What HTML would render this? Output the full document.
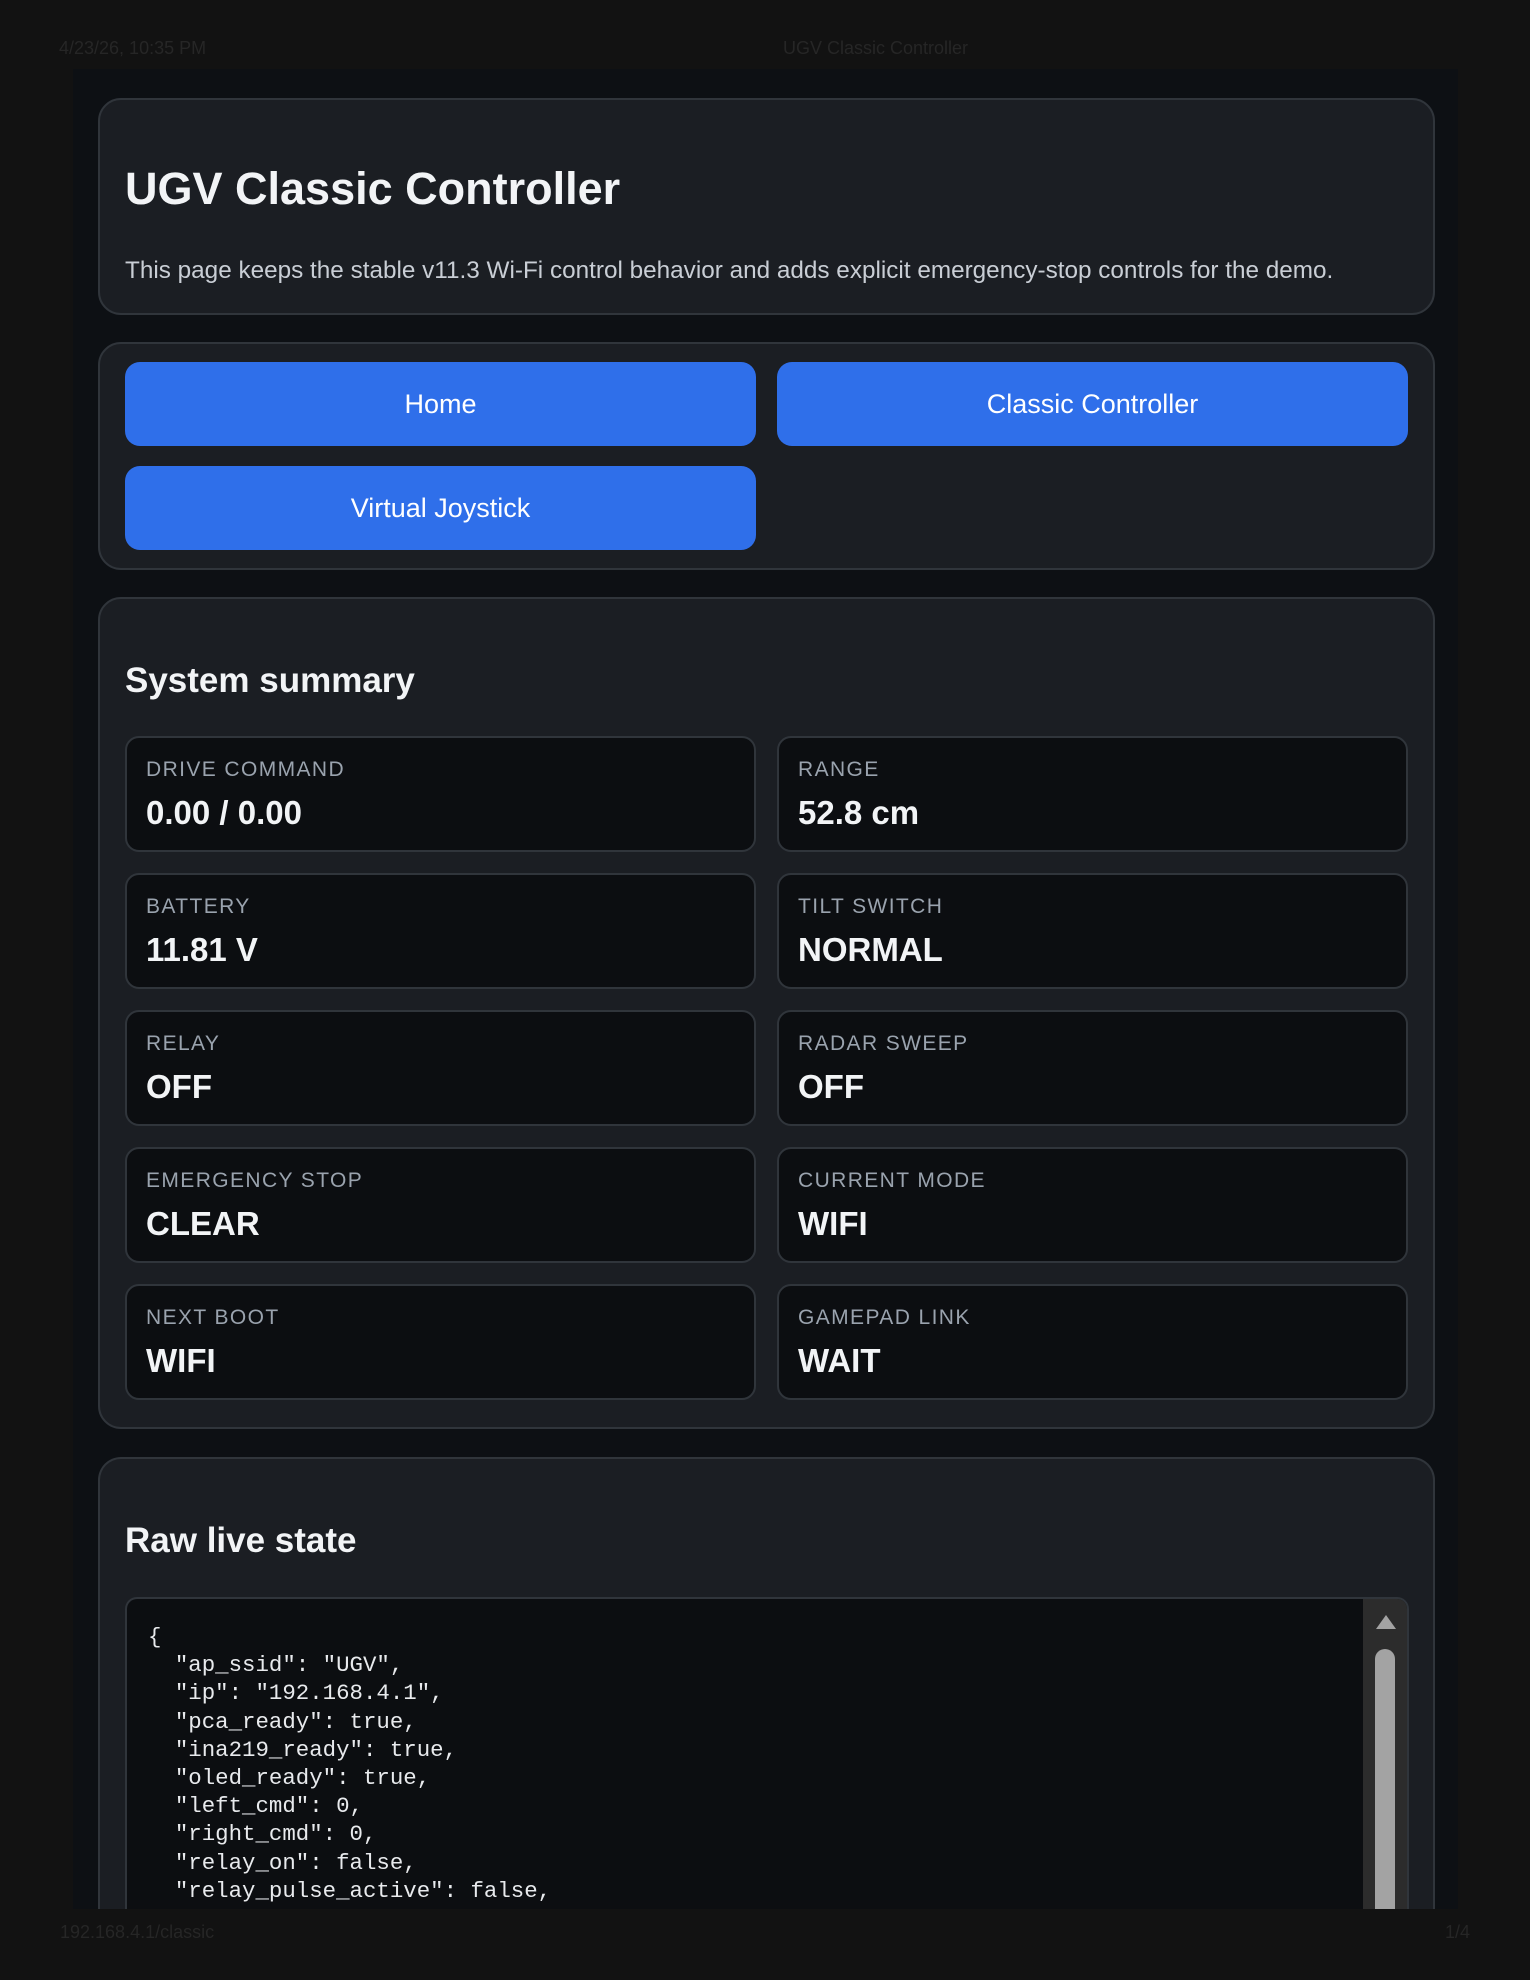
<!DOCTYPE html>
<html><head><meta charset="utf-8"><style>
*{box-sizing:border-box;margin:0;padding:0}
html,body{width:1530px;height:1980px;background:#121212;overflow:hidden;font-family:"Liberation Sans",Arial,sans-serif;position:relative}
.hdr{position:absolute;font-size:18px;color:#262626}
.wrap{position:absolute;left:73px;top:69px;width:1385px;height:1840px;background:#0d1014;overflow:hidden}
.card{position:absolute;left:25px;width:1337px;background:#1b1e23;border:2px solid #30353b;border-radius:23px}
.btn{position:absolute;height:84px;width:631px;background:#2f6fea;border-radius:15px;color:#fff;font-size:27px;display:flex;align-items:center;justify-content:center}
.stat{position:absolute;width:631px;height:116px;background:#0c0e11;border:2px solid #30353b;border-radius:14px}
.stat .l{position:absolute;left:19px;top:20px;font-size:21px;letter-spacing:1.4px;color:#9aa3ae}
.stat .v{position:absolute;left:19px;top:56px;font-size:33px;font-weight:bold;color:#f2f4f6}
h2{position:absolute;left:25px;font-size:35px;font-weight:bold;color:#f2f4f6}
pre{font-family:"Liberation Mono","DejaVu Sans Mono",monospace;font-size:22.4px;line-height:28.2px;color:#e8eaed}
</style></head><body>
<div class="hdr" style="left:59px;top:38px">4/23/26, 10:35 PM</div>
<div class="hdr" style="left:783px;top:38px">UGV Classic Controller</div>
<div class="wrap">
 <div class="card" style="top:29px;height:217px">
  <div style="position:absolute;left:25px;top:63px;font-size:45px;font-weight:bold;color:#f2f4f6">UGV Classic Controller</div>
  <div style="position:absolute;left:25px;top:157px;font-size:24.3px;color:#c9ced5;white-space:nowrap">This page keeps the stable v11.3 Wi-Fi control behavior and adds explicit emergency-stop controls for the demo.</div>
 </div>
 <div class="card" style="top:273px;height:228px">
  <div class="btn" style="left:25px;top:18px">Home</div>
  <div class="btn" style="left:677px;top:18px">Classic Controller</div>
  <div class="btn" style="left:25px;top:122px">Virtual Joystick</div>
 </div>
 <div class="card" style="top:528px;height:832px">
  <h2 style="top:62px">System summary</h2>
  <div class="stat" style="left:25px;top:137px"><div class="l">DRIVE COMMAND</div><div class="v">0.00 / 0.00</div></div>
  <div class="stat" style="left:677px;top:137px"><div class="l">RANGE</div><div class="v">52.8 cm</div></div>
  <div class="stat" style="left:25px;top:274px"><div class="l">BATTERY</div><div class="v">11.81 V</div></div>
  <div class="stat" style="left:677px;top:274px"><div class="l">TILT SWITCH</div><div class="v">NORMAL</div></div>
  <div class="stat" style="left:25px;top:411px"><div class="l">RELAY</div><div class="v">OFF</div></div>
  <div class="stat" style="left:677px;top:411px"><div class="l">RADAR SWEEP</div><div class="v">OFF</div></div>
  <div class="stat" style="left:25px;top:548px"><div class="l">EMERGENCY STOP</div><div class="v">CLEAR</div></div>
  <div class="stat" style="left:677px;top:548px"><div class="l">CURRENT MODE</div><div class="v">WIFI</div></div>
  <div class="stat" style="left:25px;top:685px"><div class="l">NEXT BOOT</div><div class="v">WIFI</div></div>
  <div class="stat" style="left:677px;top:685px"><div class="l">GAMEPAD LINK</div><div class="v">WAIT</div></div>
 </div>
 <div class="card" style="top:1388px;height:452px;border-bottom:none;border-radius:23px 23px 0 0">
  <h2 style="top:62px">Raw live state</h2>
  <div style="position:absolute;left:25px;top:138px;width:1284px;height:314px;background:#0c0e11;border:2px solid #30353b;border-bottom:none;border-radius:12px 12px 0 0;overflow:hidden">
   <pre style="position:absolute;left:21px;top:24px">{
  "ap_ssid": "UGV",
  "ip": "192.168.4.1",
  "pca_ready": true,
  "ina219_ready": true,
  "oled_ready": true,
  "left_cmd": 0,
  "right_cmd": 0,
  "relay_on": false,
  "relay_pulse_active": false,</pre>
   <div style="position:absolute;right:0;top:0;width:44px;height:100%;background:#2c2c2c"></div>
   <div style="position:absolute;right:11px;top:16px;width:0;height:0;border-left:10px solid transparent;border-right:10px solid transparent;border-bottom:14px solid #a3a3a3"></div>
   <div style="position:absolute;right:12px;top:50px;width:20px;height:300px;background:#a3a3a3;border-radius:10px 10px 0 0"></div>
  </div>
 </div>
</div>
<div class="hdr" style="left:60px;top:1922px">192.168.4.1/classic</div>
<div class="hdr" style="left:1445px;top:1922px">1/4</div>
</body></html>
